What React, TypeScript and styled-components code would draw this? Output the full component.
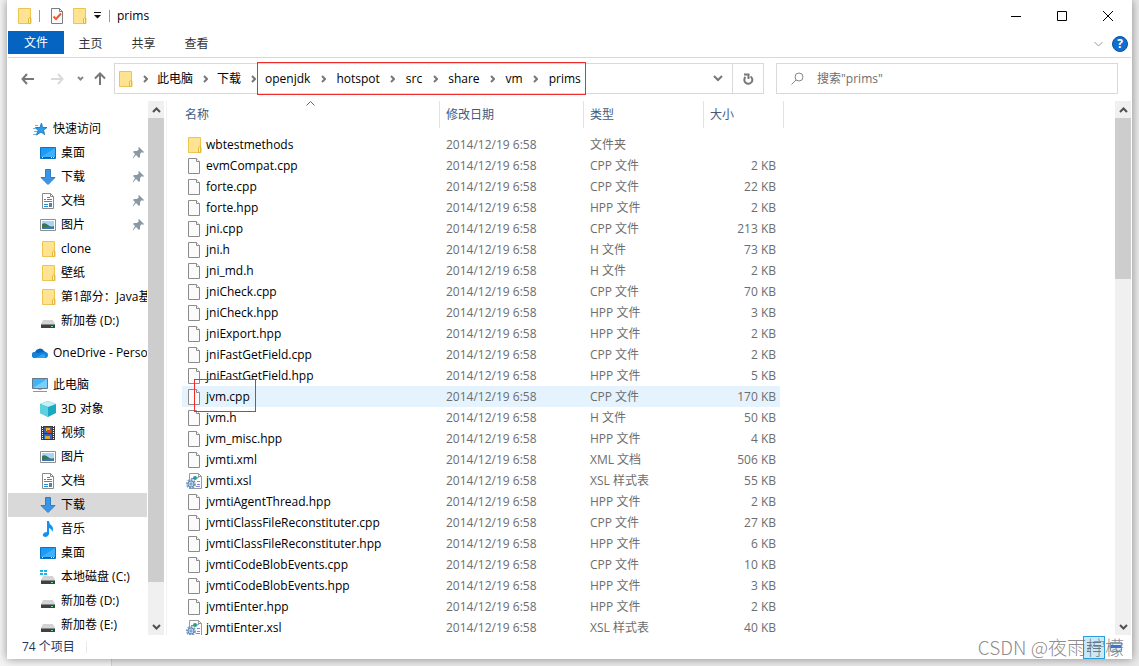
import React from "react";
import styled, { createGlobalStyle, css } from "styled-components";

const GlobalStyle = createGlobalStyle`
  *, *::before, *::after { box-sizing: border-box; }
  body {
    margin: 0;
    background: #e9e9e9;
    font-family: "Open Sans", "Noto Sans CJK SC", sans-serif;
    font-size: 12px;
    line-height: 16px;
    color: #000;
    overflow: hidden;
  }
  button, input { font: inherit; color: inherit; }
  button { padding: 0; border: 0; background: none; }
  a { color: inherit; text-decoration: none; }
  svg { display: block; flex: none; }
`;

/* ---------- window frame ---------- */

const Desktop = styled.div`
  display: flex;
  height: 100vh;
  padding: 0 7px 7px;
  background: linear-gradient(90deg, #f4f4f4 111px, #d2d2d2 111px, #d2d2d2 112px, #e9e9e9 112px);
`;

const Window = styled.main`
  position: relative;
  flex: 1;
  min-width: 0;
  display: flex;
  flex-direction: column;
  padding: 0 1px;
  background: #fff;
  box-shadow: 0 0 9px rgba(0, 0, 0, 0.42);
`;

const TitleBar = styled.header`
  display: flex;
  align-items: center;
  height: 31px;
  padding-left: 8px;
  flex: none;
`;

const QuickAccess = styled.div`
  display: flex;
  align-items: center;
  flex: 1;
  gap: 7px;
`;

const Divider = styled.span<{ $light?: boolean }>`
  width: 1px;
  height: ${(p) => (p.$light ? 11 : 12)}px;
  background: ${(p) => (p.$light ? "#e8e8e8" : "#999")};
`;

const QuickButton = styled.button<{ $width: number }>`
  display: flex;
  justify-content: center;
  width: ${(p) => p.$width}px;
`;

const Title = styled.h1`
  margin: 0;
  font-size: 12px;
  font-weight: 400;
`;

const CaptionButton = styled.button`
  display: flex;
  align-items: center;
  justify-content: center;
  width: 46px;
  height: 31px;
`;

const Ribbon = styled.nav`
  display: flex;
  height: 27px;
  flex: none;
  border-bottom: 1px solid #d9d9d9;
`;

const Tab = styled.button<{ $primary?: boolean }>`
  width: ${(p) => (p.$primary ? 56 : 53)}px;
  height: ${(p) => (p.$primary ? 23 : 25)}px;
  color: ${(p) => (p.$primary ? "#fff" : "#333")};
  background: ${(p) => (p.$primary ? "#0563c1" : "transparent")};
`;

const RibbonEnd = styled.div`
  display: flex;
  align-items: center;
  gap: 9px;
  margin-left: auto;
  padding-right: 3px;
`;

const HelpButton = styled.button`
  width: 16px;
  height: 16px;
  border-radius: 50%;
  border: 1px solid #0a4f9c;
  background: #0f6fd1;
  color: #fff;
  font-weight: 700;
  line-height: 14px;
`;

/* ---------- address row ---------- */

const AddressRow = styled.div`
  display: flex;
  align-items: center;
  height: 43px;
  flex: none;
  padding: 0 13px 2px 7px;
`;

const HistoryButton = styled.button<{ $width: number }>`
  display: flex;
  justify-content: center;
  width: ${(p) => p.$width}px;
`;

const AddressBox = styled.div`
  display: flex;
  align-items: center;
  flex: 1;
  min-width: 0;
  height: 31px;
  border: 1px solid #d9d9d9;
  margin-right: 12px;
`;

const Crumbs = styled.div`
  position: relative;
  display: flex;
  align-items: center;
`;

const FolderSlot = styled.span`
  padding-left: 2px;
`;

const Chevron = styled.span<{ $wide?: boolean }>`
  display: flex;
  justify-content: center;
  width: ${(p) => (p.$wide ? 26 : 24)}px;
`;

const RedFrame = styled.span<{ $where: "path" | "file" }>`
  position: absolute;
  border: 1px solid #ee2c2c;
  pointer-events: none;
  ${(p) =>
    p.$where === "path"
      ? css`inset: -9px -5px -8px -8px;`
      : css`inset: -10px -6px -7px -12px;`}
`;

const BoxButton = styled.button<{ $divided?: boolean }>`
  display: flex;
  align-items: center;
  justify-content: center;
  width: ${(p) => (p.$divided ? 31 : 29)}px;
  height: 29px;
  border-left: ${(p) => (p.$divided ? "1px solid #d9d9d9" : "0")};
`;

const Spacer = styled.span`
  flex: 1;
`;

const SearchBox = styled.label`
  display: flex;
  align-items: center;
  gap: 13px;
  width: 31%;
  height: 31px;
  padding-left: 14px;
  border: 1px solid #d9d9d9;
`;

const SearchInput = styled.input`
  flex: 1;
  min-width: 0;
  border: 0;
  outline: 0;
  padding: 0;
  background: transparent;
  &::placeholder { color: #6d6d6d; opacity: 1; }
`;

/* ---------- body ---------- */

const Body = styled.div`
  display: flex;
  flex: 1;
  min-height: 0;
`;

const NavPane = styled.nav`
  width: 139px;
  flex: none;
  overflow: hidden;
  padding-top: 16px;
  margin-right: 1px;
`;

const NavGroup = styled.ul`
  list-style: none;
  margin: 0 0 8px;
  padding: 0;
`;

const NavLink = styled.a<{ $root?: boolean; $active?: boolean }>`
  display: flex;
  align-items: center;
  gap: 5px;
  height: 24px;
  padding-left: ${(p) => (p.$root ? 24 : 32)}px;
  white-space: nowrap;
  background: ${(p) => (p.$active ? "#d9d9d9" : "transparent")};
  & > svg:last-child { margin-left: auto; margin-right: 3px; }
`;

const Scrollbar = styled.div`
  display: flex;
  flex-direction: column;
  flex: none;
  width: 16px;
  background: #f0f0f0;
`;

const ScrollButton = styled.button`
  display: flex;
  align-items: center;
  justify-content: center;
  height: 17px;
`;

const Thumb = styled.div<{ $share: number }>`
  flex: ${(p) => p.$share} 1 0;
  background: #cdcdcd;
`;

const Track = styled.div<{ $share: number }>`
  flex: ${(p) => p.$share} 1 0;
`;

const ListPane = styled.section`
  flex: 1;
  min-width: 0;
  overflow: hidden;
  margin-left: 2px;
  padding-left: 15px;
  border-left: 1px solid #f2f2f2;
`;

const FileTable = styled.table`
  width: 602px;
  table-layout: fixed;
  border-collapse: separate;
  border-spacing: 0;
`;

const Col = styled.col<{ $width: number }>`
  width: ${(p) => p.$width}px;
`;

const HeadCell = styled.th`
  padding: 0 0 6px;
  font-weight: 400;
  text-align: left;
`;

const SortButton = styled.button<{ $first?: boolean }>`
  position: relative;
  display: block;
  width: 100%;
  height: 27px;
  padding-left: ${(p) => (p.$first ? 3 : 6)}px;
  border-right: 1px solid #e2e2e2;
  color: #43597b;
  text-align: left;
`;

const SortMark = styled.span`
  position: absolute;
  top: 0;
  left: 50%;
  margin-left: -5px;
`;

const Row = styled.tr<{ $selected?: boolean }>`
  background: ${(p) =>
    p.$selected ? "linear-gradient(#e5f3ff, #e5f3ff) 0 0 / calc(100% - 4px) 100% no-repeat" : "none"};
`;

const Cell = styled.td<{ $size?: boolean }>`
  height: 21px;
  padding: ${(p) => (p.$size ? "0 8px 0 0" : "0 0 0 6px")};
  color: #6d6d6d;
  text-align: ${(p) => (p.$size ? "right" : "left")};
  white-space: nowrap;
`;

const NameCell = styled(Cell)`
  padding-left: 4px;
  color: #000;
`;

const FileName = styled.span`
  display: flex;
  align-items: center;
  gap: 4px;
`;

const Label = styled.span`
  position: relative;
`;

const StatusBar = styled.footer`
  display: flex;
  align-items: center;
  height: 24px;
  flex: none;
  padding-left: 14px;
  gap: 11px;
  color: #1e395b;
`;

const ViewButtons = styled.div`
  display: flex;
  align-items: center;
  margin-left: auto;
  padding-right: 4px;
`;

const ViewButton = styled.button<{ $on?: boolean }>`
  display: flex;
  align-items: center;
  justify-content: center;
  width: 22px;
  height: 23px;
  border: 1px solid ${(p) => (p.$on ? "#26a0da" : "transparent")};
  background: ${(p) => (p.$on ? "#cbe8f6" : "transparent")};
`;

const Watermark = styled.div`
  position: absolute;
  right: 8px;
  bottom: 1px;
  font-family: "Noto Sans CJK SC", sans-serif;
  font-size: 19px;
  line-height: 22px;
  font-weight: 300;
  color: rgba(110, 110, 110, 0.8);
  white-space: nowrap;
  pointer-events: none;
`;

/* ---------- icons ---------- */

const Svg = ({ children }: { children: React.ReactNode }) => (
  <svg width="16" height="16" viewBox="0 0 16 16" fill="none" aria-hidden="true">
    {children}
  </svg>
);

const FolderIcon = () => (
  <Svg>
    <path d="M2.5.5h12v9l.5 1v5H2.5z" fill="#ffe392" stroke="#eac651" />
    <path d="M12.5 15.5V11l1-1.500h1v6z" fill="#fff0b8" stroke="#e3b93c" />
  </Svg>
);

const FileIcon = () => (
  <Svg>
    <path d="M2.500.5h8l3 3v12h-11z" fill="#fbfbfb" stroke="#8b8b8b" />
    <path d="M10.500.5v3h3" fill="#fff" stroke="#8b8b8b" />
  </Svg>
);

const SheetIcon = () => (
  <Svg>
    <path d="M3.500.5h9l3 3v12h-12z" fill="#fdfdfd" stroke="#9b9b9b" />
    <path d="M12.500.5v3h3" stroke="#9b9b9b" />
    <path d="M5 5.500h3M11 8.500h3M11 11.500h3M10 13.500h4" stroke="#7f85e6" />
    <circle cx="9" cy="5" r="2" fill="#27a07a" />
    <path d="M11 5.500l2-2" stroke="#3a58c8" />
    <circle cx="5" cy="11" r="4" stroke="#7c9fc4" strokeWidth="2" strokeDasharray="2 1" />
    <circle cx="5" cy="11" r="3" fill="#c4dcef" stroke="#5d86b4" />
    <circle cx="5" cy="11" r="1" fill="#fff" stroke="#5d86b4" />
  </Svg>
);

const CheckDocIcon = () => (
  <Svg>
    <path d="M2.500.5h8l3 3v12h-11z" fill="#fbfbfb" stroke="#7d7d7d" />
    <path d="M10.500.5v3h3" stroke="#7d7d7d" />
    <path d="M4.500 8.500l2.500 2.500 5-5.500" stroke="#f0592a" strokeWidth="2" />
  </Svg>
);

const StarIcon = () => (
  <Svg>
    <path d="M9.500 2l1 4.500h4.500L11.500 9l1 4.500L9 11l-4.500 3 1.500-4.500L3.500 6.500H8z" fill="#2f9be8" stroke="#1b7fcf" />
    <path d="M3 4.500h3M1 7.500h3M2 10.500h3M1 13.500h3" stroke="#67b7ee" />
  </Svg>
);

const DesktopIcon = () => (
  <Svg>
    <path d="M.5 2.500h15v11H.5z" fill="#1c9cf6" stroke="#0c72c4" />
    <path d="M1 12L15 3v9z" fill="#3fb0ff" />
    <path d="M1 12.500h14" stroke="#0b5fa8" />
    <path d="M2 12.500h1M11 12.500h1M13 12.500h1" stroke="#fff" />
  </Svg>
);

const DownloadIcon = () => (
  <Svg>
    <path d="M5.500.5h5v8h4.500L8 15.500 1 8.500h4.500z" fill="#3c94e4" stroke="#2a7dcb" />
  </Svg>
);

const DocumentIcon = () => (
  <Svg>
    <path d="M2.500.5h8l3 3v12h-11z" fill="#fff" stroke="#8a8a8a" />
    <path d="M10.500.5v3h3" stroke="#8a8a8a" />
    <path d="M7 4.500h3M4 6.500h2M7 6.500h5M4 8.500h8M4 11.500h4M4 13.500h4" stroke="#2b8fd6" />
    <path d="M9 10h3v4H9z" fill="#4c86a5" />
  </Svg>
);

const PictureIcon = () => (
  <Svg>
    <path d="M.5 2.500h15v11H.5z" fill="#fff" stroke="#8f8f8f" />
    <path d="M2 4h12v8H2z" fill="#a9d4f5" />
    <path d="M2 7q3-2 6 1t6 1v3H2z" fill="#3b7357" />
    <path d="M2 11q5-2 12-1v2H2z" fill="#3b76b4" />
  </Svg>
);

const DriveIcon = ({ system }: { system?: boolean }) => (
  <Svg>
    <path d="M3 7h10l2 4H1z" fill="#d2d4d6" />
    <path d="M1 11h14v4H1z" fill="#3f4144" />
    <path d="M1 11.500h14" stroke="#85888b" />
    <path d="M11 13.500h2" stroke="#4cf07b" />
    {system && <path d="M0 1h3v2H0zM4 1h3v2H4zM0 4h3v2H0zM4 4h3v2H4z" fill="#19b5f1" />}
  </Svg>
);

const CloudIcon = () => (
  <Svg>
    <path d="M3 13a3 3 0 0 1 0-6 5 5 0 0 1 9-1 4 4 0 0 1 1 7z" fill="#0a64bd" />
    <path d="M3 13a3 3 0 1 1 2-5l8-1a3 3 0 0 1 0 6z" fill="#1583dc" />
    <path d="M3 13l8-4a3 3 0 0 1 2 4z" fill="#2ba6ee" />
  </Svg>
);

const ComputerIcon = () => (
  <Svg>
    <path d="M.5 1.500h15v10H.5z" fill="#3fb4f7" stroke="#64798a" />
    <path d="M1 11L15 2v9z" fill="#79cffb" />
    <path d="M6 12h4v1H6z" fill="#b0bcc5" />
    <path d="M1 14.500h14" stroke="#8299a9" />
  </Svg>
);

const CubeIcon = () => (
  <Svg>
    <path d="M8 0l8 3v9l-8 4-8-4V3z" fill="#19a9c2" />
    <path d="M8 0l8 3-8 3-8-3z" fill="#c1f1f6" />
    <path d="M8 6v10l-8-4V3z" fill="#5cd0de" />
  </Svg>
);

const VideoIcon = () => (
  <Svg>
    <path d="M1 1h14v14H1z" fill="#3a3a3a" />
    <path d="M2.500 1v14M13.500 1v14" stroke="#fff" strokeDasharray="1 1" />
    <path d="M4 2h8v6H4z" fill="#3461a8" />
    <path d="M4 9h8v5H4z" fill="#2a65c4" />
    <path d="M6 3h4v3H6z" fill="#f0b32a" />
    <path d="M7 5h4v3H7z" fill="#c94a2b" />
    <path d="M5 11h5v3H5z" fill="#e2a32d" />
  </Svg>
);

const MusicIcon = () => (
  <Svg>
    <path d="M7 0h2q0 3 3 5 2 3 0 6 0-3-3-4v6q-1 3-4 3-3-1-2-3 1-2 4-2z" fill="#1292f0" />
  </Svg>
);

const PinIcon = () => (
  <svg width="11" height="12" viewBox="0 0 11 12" fill="none" aria-hidden="true">
    <path d="M6 0l5 5-1 1-1-1-2 2v3L6 11 3 8 0 11.500v-1L2 7 0 5l1-1h3l2-2-1-1z" fill="#8b99a4" />
  </svg>
);

type StrokeProps = { w: number; h: number; d: string; color: string; weight?: number };
const Stroke = ({ w, h, d, color, weight = 1 }: StrokeProps) => (
  <svg width={w} height={h} viewBox={`0 0 ${w} ${h}`} fill="none" aria-hidden="true">
    <path d={d} stroke={color} strokeWidth={weight} />
  </svg>
);

const CrumbArrow = ({ wide }: { wide?: boolean }) => (
  <Chevron $wide={wide}>
    <Stroke w={5} h={8} d="M1 1l3 3-3 3" color="#777" weight={2} />
  </Chevron>
);

/* ---------- data ---------- */

type NavItem = { label: string; icon: React.ReactNode; pinned?: boolean; active?: boolean };

const navGroups: NavItem[][] = [
  [
    { label: "快速访问", icon: <StarIcon /> },
    { label: "桌面", icon: <DesktopIcon />, pinned: true },
    { label: "下载", icon: <DownloadIcon />, pinned: true },
    { label: "文档", icon: <DocumentIcon />, pinned: true },
    { label: "图片", icon: <PictureIcon />, pinned: true },
    { label: "clone", icon: <FolderIcon /> },
    { label: "壁纸", icon: <FolderIcon /> },
    { label: "第1部分：Java基", icon: <FolderIcon /> },
    { label: "新加卷 (D:)", icon: <DriveIcon /> },
  ],
  [{ label: "OneDrive - Perso", icon: <CloudIcon /> }],
  [
    { label: "此电脑", icon: <ComputerIcon /> },
    { label: "3D 对象", icon: <CubeIcon /> },
    { label: "视频", icon: <VideoIcon /> },
    { label: "图片", icon: <PictureIcon /> },
    { label: "文档", icon: <DocumentIcon /> },
    { label: "下载", icon: <DownloadIcon />, active: true },
    { label: "音乐", icon: <MusicIcon /> },
    { label: "桌面", icon: <DesktopIcon /> },
    { label: "本地磁盘 (C:)", icon: <DriveIcon system /> },
    { label: "新加卷 (D:)", icon: <DriveIcon /> },
    { label: "新加卷 (E:)", icon: <DriveIcon /> },
  ],
];

const files: [string, string, string][] = [
  ["wbtestmethods", "文件夹", ""],
  ["evmCompat.cpp", "CPP 文件", "2 KB"],
  ["forte.cpp", "CPP 文件", "22 KB"],
  ["forte.hpp", "HPP 文件", "2 KB"],
  ["jni.cpp", "CPP 文件", "213 KB"],
  ["jni.h", "H 文件", "73 KB"],
  ["jni_md.h", "H 文件", "2 KB"],
  ["jniCheck.cpp", "CPP 文件", "70 KB"],
  ["jniCheck.hpp", "HPP 文件", "3 KB"],
  ["jniExport.hpp", "HPP 文件", "2 KB"],
  ["jniFastGetField.cpp", "CPP 文件", "2 KB"],
  ["jniFastGetField.hpp", "HPP 文件", "5 KB"],
  ["jvm.cpp", "CPP 文件", "170 KB"],
  ["jvm.h", "H 文件", "50 KB"],
  ["jvm_misc.hpp", "HPP 文件", "4 KB"],
  ["jvmti.xml", "XML 文档", "506 KB"],
  ["jvmti.xsl", "XSL 样式表", "55 KB"],
  ["jvmtiAgentThread.hpp", "HPP 文件", "2 KB"],
  ["jvmtiClassFileReconstituter.cpp", "CPP 文件", "27 KB"],
  ["jvmtiClassFileReconstituter.hpp", "HPP 文件", "6 KB"],
  ["jvmtiCodeBlobEvents.cpp", "CPP 文件", "10 KB"],
  ["jvmtiCodeBlobEvents.hpp", "HPP 文件", "3 KB"],
  ["jvmtiEnter.hpp", "HPP 文件", "2 KB"],
  ["jvmtiEnter.xsl", "XSL 样式表", "40 KB"],
];

const path = ["openjdk", "hotspot", "src", "share", "vm", "prims"];

const iconFor = (name: string, type: string) => {
  if (type === "文件夹") return <FolderIcon />;
  return name.endsWith(".xsl") ? <SheetIcon /> : <FileIcon />;
};

const VerticalScroll = ({ thumb, rest }: { thumb: number; rest: number }) => (
  <Scrollbar>
    <ScrollButton aria-label="向上滚动">
      <Stroke w={9} h={6} d="M1 5l3.500-3.500L8 5" color="#505050" weight={2} />
    </ScrollButton>
    <Thumb $share={thumb} />
    <Track $share={rest} />
    <ScrollButton aria-label="向下滚动">
      <Stroke w={9} h={6} d="M1 1l3.500 3.500L8 1" color="#505050" weight={2} />
    </ScrollButton>
  </Scrollbar>
);

export default function App() {
  return (
    <Desktop>
      <GlobalStyle />
      <Window>
        <TitleBar>
          <QuickAccess>
            <FolderIcon />
            <Divider />
            <QuickButton $width={19} aria-label="属性"><CheckDocIcon /></QuickButton>
            <QuickButton $width={12} aria-label="新建文件夹"><FolderIcon /></QuickButton>
            <QuickButton $width={10} aria-label="自定义快速访问工具栏">
              <svg width="7" height="7" viewBox="0 0 7 7" aria-hidden="true">
                <path d="M0 0h7v1H0zM0 3h7L3.500 6.500z" fill="#111" />
              </svg>
            </QuickButton>
            <Divider />
            <Title>prims</Title>
          </QuickAccess>
          <CaptionButton aria-label="最小化"><Stroke w={10} h={10} d="M0 5.500h10" color="#000" /></CaptionButton>
          <CaptionButton aria-label="最大化"><Stroke w={10} h={10} d="M.5.5h9v9h-9z" color="#000" /></CaptionButton>
          <CaptionButton aria-label="关闭"><Stroke w={10} h={10} d="M0 0l10 10M10 0L0 10" color="#000" /></CaptionButton>
        </TitleBar>

        <Ribbon>
          <Tab $primary>文件</Tab>
          <Tab>主页</Tab>
          <Tab>共享</Tab>
          <Tab>查看</Tab>
          <RibbonEnd>
            <Stroke w={9} h={6} d="M.5 1l4 4 4-4" color="#999" />
            <HelpButton aria-label="帮助">?</HelpButton>
          </RibbonEnd>
        </Ribbon>

        <AddressRow>
          <HistoryButton $width={25} aria-label="后退">
            <Stroke w={13} h={12} d="M6 1L1.500 6 6 11M2 6h11" color="#777" weight={2} />
          </HistoryButton>
          <HistoryButton $width={35} aria-label="前进">
            <Stroke w={13} h={12} d="M7 1l4.500 5L7 11M11 6H0" color="#dadada" weight={2} />
          </HistoryButton>
          <HistoryButton $width={11} aria-label="最近浏览的位置">
            <Stroke w={7} h={5} d="M1 1l2.500 2.500L6 1" color="#888" weight={2} />
          </HistoryButton>
          <HistoryButton $width={28} aria-label="上移">
            <Stroke w={12} h={13} d="M1 6.500L6 1.500l5 5M6 2v11" color="#777" weight={2} />
          </HistoryButton>
          <AddressBox>
            <FolderSlot><FolderIcon /></FolderSlot>
            <Crumbs>
              <CrumbArrow />
              <a href="#computer">此电脑</a>
              <CrumbArrow />
              <a href="#downloads">下载</a>
              <CrumbArrow />
            </Crumbs>
            <Crumbs>
              {path.map((part, i) => (
                <React.Fragment key={part}>
                  {i > 0 && <CrumbArrow wide />}
                  <a href={`#${part}`}>{part}</a>
                </React.Fragment>
              ))}
              <RedFrame $where="path" />
            </Crumbs>
            <Spacer />
            <BoxButton aria-label="以前的位置">
              <Stroke w={10} h={7} d="M1 1l4 4 4-4" color="#777" weight={2} />
            </BoxButton>
            <BoxButton $divided aria-label="刷新">
              <svg width="11" height="12" viewBox="0 0 11 12" fill="none" aria-hidden="true">
                <path d="M7.500 3.500A4 4 0 1 1 2.500 4" stroke="#777" strokeWidth="2" />
                <path d="M1 1.500h4.500V6" stroke="#777" strokeWidth="2" />
              </svg>
            </BoxButton>
          </AddressBox>
          <SearchBox>
            <svg width="13" height="13" viewBox="0 0 13 13" fill="none" aria-hidden="true">
              <circle cx="8" cy="5" r="4" stroke="#888" />
              <path d="M5 8L.5 12.500" stroke="#888" />
            </svg>
            <SearchInput type="text" placeholder={'搜索"prims"'} aria-label="搜索" />
          </SearchBox>
        </AddressRow>

        <Body>
          <NavPane>
            {navGroups.map((group, g) => (
              <NavGroup key={g}>
                {group.map((item, i) => (
                  <li key={i}>
                    <NavLink href="#" $root={i === 0} $active={item.active}>
                      {item.icon}
                      <span>{item.label}</span>
                      {item.pinned && <PinIcon />}
                    </NavLink>
                  </li>
                ))}
              </NavGroup>
            ))}
          </NavPane>
          <VerticalScroll thumb={464} rest={36} />
          <ListPane>
            <FileTable>
              <colgroup>
                <Col $width={258} />
                <Col $width={144} />
                <Col $width={120} />
                <Col $width={80} />
              </colgroup>
              <thead>
                <tr>
                  <HeadCell>
                    <SortButton $first>
                      名称
                      <SortMark>
                        <Stroke w={9} h={5} d="M.5 4.500l4-4 4 4" color="#666" />
                      </SortMark>
                    </SortButton>
                  </HeadCell>
                  <HeadCell><SortButton>修改日期</SortButton></HeadCell>
                  <HeadCell><SortButton>类型</SortButton></HeadCell>
                  <HeadCell><SortButton>大小</SortButton></HeadCell>
                </tr>
              </thead>
              <tbody>
                {files.map(([name, type, size]) => (
                  <Row key={name} $selected={name === "jvm.cpp"}>
                    <NameCell>
                      <FileName>
                        {iconFor(name, type)}
                        <Label>
                          {name}
                          {name === "jvm.cpp" && <RedFrame $where="file" />}
                        </Label>
                      </FileName>
                    </NameCell>
                    <Cell>2014/12/19 6:58</Cell>
                    <Cell>{type}</Cell>
                    <Cell $size>{size}</Cell>
                  </Row>
                ))}
              </tbody>
            </FileTable>
          </ListPane>
          <VerticalScroll thumb={161} rest={339} />
        </Body>

        <StatusBar>
          <span>74 个项目</span>
          <Divider $light />
          <ViewButtons>
            <ViewButton $on aria-label="详细信息">
              <Stroke w={14} h={12} d="M0 1.500h4M6 1.500h8M0 4.500h4M6 4.500h8M0 7.500h4M6 7.500h8M0 10.500h4M6 10.500h8" color="#5b7f9b" />
            </ViewButton>
            <ViewButton aria-label="大图标">
              <svg width="12" height="12" viewBox="0 0 12 12" fill="none" aria-hidden="true">
                <path d="M.5 1.500h11v9H.5z" fill="#dfeefa" stroke="#8a9cae" />
                <path d="M1 4h10v3H1z" fill="#3f74c8" />
              </svg>
            </ViewButton>
          </ViewButtons>
        </StatusBar>
        <Watermark>CSDN @夜雨柠檬</Watermark>
      </Window>
    </Desktop>
  );
}
